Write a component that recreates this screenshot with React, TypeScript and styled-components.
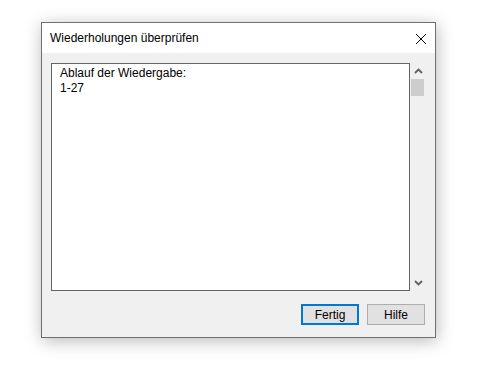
import React from 'react';
import styled, { createGlobalStyle } from 'styled-components';

const GlobalStyle = createGlobalStyle`
  html, body {
    margin: 0;
    padding: 0;
    background: #ffffff;
  }
  body {
    font-family: "Liberation Sans", Arial, sans-serif;
  }
`;

// --- Seite ---
const Page = styled.div`
  width: 489px;
  height: 367px;
  padding: 22px 0 0 41px;
  box-sizing: border-box;
`;

// --- Dialogfenster ---
const Window = styled.div`
  width: 395px;
  height: 316px;
  box-sizing: border-box;
  border: 1px solid #6f6f6f;
  background: #f0f0f0;
  box-shadow: 1px 3px 16px rgba(0, 0, 0, 0.28);
  display: flex;
  flex-direction: column;
`;

const TitleBar = styled.div`
  height: 30px;
  background: #ffffff;
  display: flex;
  align-items: center;
  justify-content: space-between;
  padding: 0 9px 0 8px;
`;

const Title = styled.span`
  font-size: 12px;
  line-height: 30px;
  color: #000000;
`;

const CloseButton = styled.div`
  width: 10px;
  height: 10px;
  display: flex;
  margin-top: 1px;
`;

const Body = styled.div`
  flex: 1;
  display: flex;
  flex-direction: column;
  padding: 10px 8px 12px 9px;
`;

const ListRow = styled.div`
  display: flex;
  height: 228px;
`;

const TextBox = styled.div`
  width: 359px;
  box-sizing: border-box;
  border: 1px solid #646464;
  background: #ffffff;
  padding: 2px 8px;
  font-size: 12px;
  line-height: 15px;
  color: #000000;
`;

const ScrollBar = styled.div`
  width: 17px;
  display: flex;
  flex-direction: column;
  align-items: stretch;
  background: #f0f0f0;
`;

const ArrowButton = styled.div`
  height: 16px;
  display: flex;
  align-items: center;
  justify-content: center;
`;

const Track = styled.div`
  flex: 1;
  display: flex;
  flex-direction: column;
  padding: 0 3px 0 1px;
`;

const Thumb = styled.div`
  height: 17px;
  background: #cdcdcd;
`;

const ButtonRow = styled.div`
  display: flex;
  justify-content: flex-end;
  gap: 8px;
  margin-top: 13px;
  padding-right: 2px;
`;

const Button = styled.div<{ $primary?: boolean }>`
  width: 58px;
  height: 21px;
  box-sizing: border-box;
  border: ${(p) => (p.$primary ? '2px solid #0078d7' : '1px solid #adadad')};
  background: #e1e1e1;
  display: flex;
  align-items: center;
  justify-content: center;
  font-size: 12px;
  color: #000000;
`;

const Chevron: React.FC<{ up?: boolean }> = ({ up }) => (
  <svg width="9" height="6" viewBox="0 0 9 6">
    <path
      d={up ? 'M1 5 L4.5 1.5 L8 5' : 'M1 1 L4.5 4.5 L8 1'}
      fill="none"
      stroke="#606060"
      strokeWidth="1.8"
    />
  </svg>
);

const App: React.FC = () => {
  return (
    <>
      <GlobalStyle />
      <Page>
        <Window>
          <TitleBar>
            <Title>Wiederholungen überprüfen</Title>
            <CloseButton>
              <svg width="10" height="10" viewBox="0 0 10 10">
                <path d="M0 0 L10 10 M10 0 L0 10" stroke="#000" strokeWidth="1" />
              </svg>
            </CloseButton>
          </TitleBar>
          <Body>
            <ListRow>
              <TextBox>
                Ablauf der Wiedergabe:
                <br />
                1-27
              </TextBox>
              <ScrollBar>
                <ArrowButton>
                  <Chevron up />
                </ArrowButton>
                <Track>
                  <Thumb />
                </Track>
                <ArrowButton>
                  <Chevron />
                </ArrowButton>
              </ScrollBar>
            </ListRow>
            <ButtonRow>
              <Button $primary>Fertig</Button>
              <Button>Hilfe</Button>
            </ButtonRow>
          </Body>
        </Window>
      </Page>
    </>
  );
};

export default App;
